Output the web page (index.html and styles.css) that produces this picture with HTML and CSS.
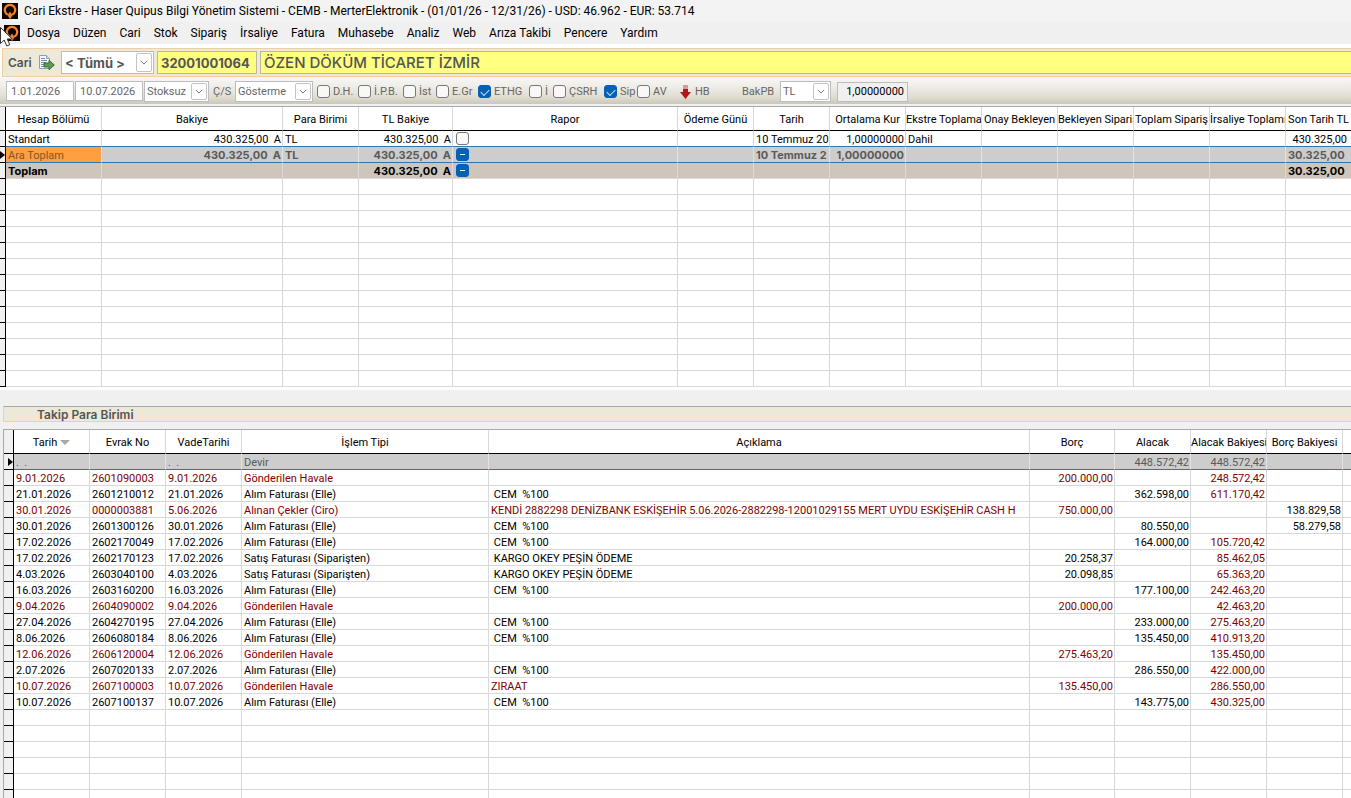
FILE: index.html
```html
<!DOCTYPE html>
<html lang="tr">
<head>
<meta charset="utf-8">
<title>Cari Ekstre</title>
<link rel="stylesheet" href="styles.css">
</head>
<body>
<svg class="defs" width="0" height="0" aria-hidden="true">
  <symbol id="logo" viewBox="0 0 16 16">
    <rect width="16" height="16" fill="#0d0603"/>
    <path d="M5.800 11.700A5.200 5.200 0 1 1 10.200 11.700" fill="none" stroke="#f58220" stroke-width="2.200"/>
    <path d="M8 8.500L10.400 12L8.700 15.500H7.300L5.600 12Z" fill="#f58220"/>
  </symbol>
  <symbol id="chevron" viewBox="0 0 10 6">
    <path d="M1 1L5 5L9 1" fill="none" stroke="#666" stroke-width="1.1"/>
  </symbol>
</svg>

<header class="titlebar">
  <svg class="logo"><use href="#logo"/></svg>
  <span>Cari Ekstre - Haser Quipus Bilgi Yönetim Sistemi - CEMB - MerterElektronik - (01/01/26 - 12/31/26) - USD: 46.962 - EUR: 53.714</span>
</header>

<nav class="menubar">
  <svg class="logo"><use href="#logo"/></svg>
  <button>Dosya</button><button>Düzen</button><button>Cari</button><button>Stok</button><button>Sipariş</button><button>İrsaliye</button><button>Fatura</button><button>Muhasebe</button><button>Analiz</button><button>Web</button><button>Arıza Takibi</button><button>Pencere</button><button>Yardım</button>
  <svg class="pointer" viewBox="0 0 13 20"><path d="M0.500 0.500V16.500L4.200 13L6.800 19L9.800 17.700L7.200 12H12.300Z" fill="#fff" stroke="#333" stroke-width="1"/></svg>
</nav>

<section class="account">
  <label for="scope">Cari</label>
  <button class="icon-button" aria-label="Aktar">
    <svg viewBox="0 0 17 17">
      <path d="M1.500 1.500H8.500L11.500 4.500V14.500H1.500Z" fill="#f4f8fc" stroke="#8aa0b8"/>
      <path d="M8.500 1.500V4.500H11.500" fill="#d5e2ef" stroke="#8aa0b8"/>
      <path d="M3 4.500H7M3 6.500H9M3 8.500H8M3 10.500H7M3 12.500H7" stroke="#6d8fb5"/>
      <path d="M6 9H11V6.300L16.300 11L11 15.700V13H6Z" fill="#5f9a52" stroke="#3c6b38"/>
    </svg>
  </button>
  <span class="combo combo-scope"><select id="scope"><option>&lt; Tümü &gt;</option></select><svg><use href="#chevron"/></svg></span>
  <input class="code" aria-label="Cari kodu" value="32001001064">
  <input class="name" aria-label="Cari adı" value="ÖZEN DÖKÜM TİCARET İZMİR">
</section>

<section class="filters">
  <div class="dates">
    <input class="date" aria-label="Başlangıç" value="1.01.2026">
    <input class="date" aria-label="Bitiş" value="10.07.2026">
    <span class="combo combo-stock"><select aria-label="Stok"><option>Stoksuz</option></select><svg><use href="#chevron"/></svg></span>
  </div>
  <label class="cs" for="cs">Ç/S</label>
  <span class="combo combo-cs"><select id="cs"><option>Gösterme</option></select><svg><use href="#chevron"/></svg></span>
  <div class="checks">
    <label><input type="checkbox">D.H.</label>
    <label><input type="checkbox">İ.P.B.</label>
    <label><input type="checkbox">İst</label>
    <label><input type="checkbox">E.Gr</label>
    <label><input type="checkbox" checked>ETHG</label>
    <label><input type="checkbox">İ</label>
    <label><input type="checkbox">ÇSRH</label>
    <label><input type="checkbox" checked>Sip</label>
    <label><input type="checkbox">AV</label>
  </div>
  <button class="hb"><svg viewBox="0 0 11 14"><path d="M3 0H8V4H3Z" fill="#d99a9a"/><path d="M3 4H8V7H11L5.500 14L0 7H3Z" fill="#b5161b"/></svg>HB</button>
  <label class="bakpb" for="pb">BakPB</label>
  <span class="combo combo-pb"><select id="pb"><option>TL</option></select><svg><use href="#chevron"/></svg></span>
  <input class="rate" aria-label="Kur" value="1,00000000" readonly>
</section>

<main>
  <div class="summary">
    <table class="grid">
      <colgroup><col class="w6"><col class="w96"><col class="w181"><col class="w76"><col class="w94"><col><col class="w76"><col class="w76"><col class="w76"><col class="w76"><col class="w76"><col class="w76"><col class="w76"><col class="w76"><col class="w65"></colgroup>
      <thead><tr><th class="gutter"></th><th>Hesap Bölümü</th><th>Bakiye</th><th>Para Birimi</th><th>TL Bakiye</th><th>Rapor</th><th>Ödeme Günü</th><th>Tarih</th><th>Ortalama Kur</th><th>Ekstre Toplama</th><th>Onay Bekleyen</th><th>Bekleyen Sipariş</th><th>Toplam Sipariş</th><th>İrsaliye Toplamı</th><th>Son Tarih TL</th></tr></thead>
      <tbody id="summary-rows">
        <tr class="before-current"><td class="gutter"></td><td>Standart</td><td class="num">430.325,00&nbsp; A</td><td>TL</td><td class="num">430.325,00&nbsp; A</td><td><input type="checkbox" aria-label="Rapor"></td><td></td><td>10 Temmuz 202</td><td class="num">1,00000000</td><td>Dahil</td><td></td><td></td><td></td><td></td><td class="num last">430.325,00</td></tr>
        <tr class="current bold"><td class="gutter"><i class="marker"></i></td><td class="focus">Ara Toplam</td><td class="num">430.325,00&nbsp; A</td><td>TL</td><td class="num">430.325,00&nbsp; A</td><td><input type="checkbox" class="partial" aria-label="Rapor"></td><td></td><td>10 Temmuz 2</td><td class="num">1,00000000</td><td></td><td></td><td></td><td></td><td></td><td class="num last">30.325,00</td></tr>
        <tr class="total bold"><td class="gutter"></td><td>Toplam</td><td></td><td></td><td class="num">430.325,00&nbsp; A</td><td><input type="checkbox" class="partial" aria-label="Rapor"></td><td></td><td></td><td></td><td></td><td></td><td></td><td></td><td></td><td class="num last">30.325,00</td></tr>
      </tbody>
    </table>
  </div>

  <h2 class="band">Takip Para Birimi</h2>

  <div class="ledger">
    <table class="grid">
      <colgroup><col class="w10"><col class="w76"><col class="w76"><col class="w76"><col class="w247"><col><col class="w85"><col class="w76"><col class="w76"><col class="w76"><col class="w8"></colgroup>
      <thead><tr><th class="gutter"></th><th>Tarih<i class="sort"></i></th><th>Evrak No</th><th>VadeTarihi</th><th>İşlem Tipi</th><th>Açıklama</th><th>Borç</th><th>Alacak</th><th>Alacak Bakiyesi</th><th>Borç Bakiyesi</th><th></th></tr></thead>
      <tbody id="ledger-rows"></tbody>
    </table>
  </div>
</main>
<script src="app.js"></script>
</body>
</html>
```
FILE: styles.css
```css
* { box-sizing: border-box; }

body {
  margin: 0;
  height: 100vh;
  display: flex;
  flex-direction: column;
  overflow: hidden;
  background: #f0f0f0;
  color: #000;
  font: 11px/14px Roboto, "Liberation Sans", sans-serif;
}

button, input, select { font: inherit; color: inherit; margin: 0; }
button { border: 0; background: none; padding: 0; }
.defs { position: absolute; }

.titlebar, .menubar {
  display: flex;
  align-items: center;
  height: 22px;
  flex: none;
  font: 12px/16px Roboto, "Noto Sans", sans-serif;
  white-space: nowrap;
}
.titlebar { background: #f3f3f3; padding-left: 2px; gap: 6px; }
.menubar { position: relative; padding-left: 4px; gap: 13px; }
.menubar .logo { margin-right: -6px; }
.logo { width: 16px; height: 16px; flex: none; }
.pointer { position: absolute; left: 0; top: 5px; width: 13px; height: 20px; }

.account {
  display: flex;
  align-items: center;
  flex: none;
  height: 29px;
  margin: 4px 0 0 2px;
  padding: 2px 0 2px 5px;
  background: #ece9d8;
  border: 1px solid #f3cda4;
  border-right: 0;
  box-shadow: 0 -4px #fff, -2px 0 #fff;
  color: #555;
  font: bold 12px/16px Inter, sans-serif;
}
.account label { font-weight: 600; width: 30px; }
.icon-button { width: 17px; height: 17px; margin-right: 6px; }
.icon-button svg { display: block; }

.combo { position: relative; display: block; height: 21px; flex: none; }
.combo select {
  width: 100%;
  height: 100%;
  appearance: none;
  border: 1px solid #bdbdbd;
  border-radius: 0;
  background: #fff;
  padding: 1px 2px 0;
}
.combo svg {
  position: absolute;
  right: 2px;
  top: 2px;
  width: 16px;
  height: calc(100% - 4px);
  padding: 3px;
  border: 1px solid #c4c4c4;
  border-radius: 2px;
  background: #fff;
  pointer-events: none;
}
.combo-scope { width: 93px; height: 23px; margin-right: 3px; font-size: 13px; }
.combo-scope select { padding: 0 3px; }
.code, .name { height: 23px; border: 1px solid #b9b9a0; background: #ffff80; padding: 0 3px; }
.code { width: 100px; margin-right: 3px; font-size: 13px; }
.name { flex: 1; min-width: 0; border-right: 0; font-size: 15px; font-weight: 500; }

.filters {
  display: flex;
  align-items: center;
  flex: none;
  height: 30px;
  padding-left: 6px;
  border-bottom: 1px solid #a9a9a9;
  background: linear-gradient(#f8f7f4 0, #f0eee9 30%, #e0dcd1 70%, #c9c8b9 27px, #f0f0f0 27px);
  color: #666;
}
.dates { display: flex; gap: 1px; margin-right: 4px; }
.date { width: 68px; height: 20px; border: 1px solid #bdbdbd; background: #fff; padding: 0 4px; }
.combo-stock { width: 65px; }
.cs { width: 22px; }
.combo-cs { width: 78px; margin-right: 4px; }
.checks {
  display: grid;
  grid-template-columns: 41px 45px 33px 42px 51px 24px 51px 33px 43px;
  flex: none;
}
.checks label { display: flex; align-items: center; gap: 3px; white-space: nowrap; }
.hb { display: flex; align-items: center; gap: 4px; width: 62px; }
.hb svg { width: 11px; height: 14px; }
.bakpb { width: 38px; }
.combo-pb { width: 51px; margin-right: 6px; }
.rate { width: 71px; height: 20px; border: 1px solid #bdbdbd; background: #f0f0f0; color: #000; text-align: right; padding: 0 3px; }

input[type="checkbox"] {
  appearance: none;
  flex: none;
  display: block;
  position: relative;
  width: 13px;
  height: 13px;
  border: 1px solid #777;
  border-radius: 3px;
  background: #f8f8f8;
}
input[type="checkbox"]:checked, input.partial { background: #0560b6; border-color: #0560b6; }
input[type="checkbox"]:checked::after {
  content: "";
  position: absolute;
  left: 2px;
  top: 3px;
  width: 7px;
  height: 4px;
  border: solid #cfe3f5;
  border-width: 0 0 1px 1px;
  transform: rotate(-45deg);
}
input.partial::after { content: ""; position: absolute; left: 3px; top: 5px; width: 5px; height: 1px; background: #fff; }

main { flex: 1; min-height: 0; display: flex; flex-direction: column; }
.summary { flex: none; background: #fff; padding-bottom: 3px; }

.grid { width: 100%; table-layout: fixed; border-collapse: separate; border-spacing: 0; background: #fff; }
.grid th, .grid td {
  height: 16px;
  padding: 2px 2px 0;
  border-right: 1px solid #d9d9d9;
  border-bottom: 1px solid #d9d9d9;
  overflow: hidden;
  white-space: pre;
  text-align: left;
  font-weight: 400;
  line-height: 13px;
}
.grid th { height: 24px; padding: 1px 0 0; border-bottom-color: #000; text-align: center; }
.grid tr > :last-child { border-right: 0; }
.grid .num { text-align: right; padding-right: 1px; }
.grid .num.last { padding-right: 4px; }
.grid .bold td { font: bold 11px/13px Inter, sans-serif; }
.grid .bold .last { padding-right: 7px; }
.grid .gutter { background: #f0f0f0; border-right-color: #000; border-bottom-color: #000; padding: 0; }
.grid .before-current td:not(.gutter), .grid .current td:not(.gutter) { border-bottom-color: #2a76b8; }
.grid .current td:not(.gutter) { background: #cdcdcd; border-right-color: #e2e2e2; color: #5a5a5a; }
.grid .current td.focus:not(.gutter) { background: #ff9f3f; color: #80562b; font: 11px/13px Roboto, sans-serif; }
.total td:not(.gutter) { background: #cec6bb; }
.grid td:has(input) { padding: 1px 3px; }
.marker { display: block; width: 0; height: 0; margin-left: auto; border: solid transparent; border-width: 4px 0 4px 5px; border-left-color: #000; }
.sort { display: inline-block; margin-left: 3px; border: solid transparent; border-width: 5px 5px 0; border-top-color: #a8a8a0; vertical-align: middle; }

.band {
  flex: none;
  margin: 16px 0 7px 3px;
  height: 16px;
  padding-left: 33px;
  background: #ece9d8;
  border-top: 1px solid #a9a9a9;
  border-bottom: 1px solid #f3cda4;
  border-left: 1px solid #f3cda4;
  color: #555;
  font: 600 12px/15px Inter, sans-serif;
}

.ledger { flex: 1; min-height: 0; overflow: hidden; margin-left: 3px; border: solid #a9a9a9; border-width: 1px 0 0 1px; background: #fff; }
.debit { color: #800000; }
.w6 { width: 6px; } .w8 { width: 8px; } .w10 { width: 10px; } .w65 { width: 65px; } .w76 { width: 76px; }
.w85 { width: 85px; } .w94 { width: 94px; } .w96 { width: 96px; } .w181 { width: 181px; } .w247 { width: 247px; }
```
FILE: app.js
```javascript
// Columns: date, document, due date, type, description, debit, credit, credit balance, debit balance
const entries = [
  [".  .", "", ".  .", "Devir", "", "", "448.572,42", "448.572,42", ""],
  ["9.01.2026", "2601090003", "9.01.2026", "Gönderilen Havale", "", "200.000,00", "", "248.572,42", ""],
  ["21.01.2026", "2601210012", "21.01.2026", "Alım Faturası (Elle)", " CEM  %100", "", "362.598,00", "611.170,42", ""],
  ["30.01.2026", "0000003881", "5.06.2026", "Alınan Çekler (Ciro)", "KENDİ 2882298 DENİZBANK ESKİŞEHİR 5.06.2026-2882298-12001029155 MERT UYDU ESKİŞEHİR CASH H", "750.000,00", "", "", "138.829,58"],
  ["30.01.2026", "2601300126", "30.01.2026", "Alım Faturası (Elle)", " CEM  %100", "", "80.550,00", "", "58.279,58"],
  ["17.02.2026", "2602170049", "17.02.2026", "Alım Faturası (Elle)", " CEM  %100", "", "164.000,00", "105.720,42", ""],
  ["17.02.2026", "2602170123", "17.02.2026", "Satış Faturası (Siparişten)", " KARGO OKEY PEŞİN ÖDEME", "20.258,37", "", "85.462,05", ""],
  ["4.03.2026", "2603040100", "4.03.2026", "Satış Faturası (Siparişten)", " KARGO OKEY PEŞİN ÖDEME", "20.098,85", "", "65.363,20", ""],
  ["16.03.2026", "2603160200", "16.03.2026", "Alım Faturası (Elle)", " CEM  %100", "", "177.100,00", "242.463,20", ""],
  ["9.04.2026", "2604090002", "9.04.2026", "Gönderilen Havale", "", "200.000,00", "", "42.463,20", ""],
  ["27.04.2026", "2604270195", "27.04.2026", "Alım Faturası (Elle)", " CEM  %100", "", "233.000,00", "275.463,20", ""],
  ["8.06.2026", "2606080184", "8.06.2026", "Alım Faturası (Elle)", " CEM  %100", "", "135.450,00", "410.913,20", ""],
  ["12.06.2026", "2606120004", "12.06.2026", "Gönderilen Havale", "", "275.463,20", "", "135.450,00", ""],
  ["2.07.2026", "2607020133", "2.07.2026", "Alım Faturası (Elle)", " CEM  %100", "", "286.550,00", "422.000,00", ""],
  ["10.07.2026", "2607100003", "10.07.2026", "Gönderilen Havale", "ZIRAAT", "135.450,00", "", "286.550,00", ""],
  ["10.07.2026", "2607100137", "10.07.2026", "Alım Faturası (Elle)", " CEM  %100", "", "143.775,00", "430.325,00", ""]
];
const redTypes = ["Gönderilen Havale", "Alınan Çekler (Ciro)"];

function addRow(body, cells) {
  const tr = body.insertRow();
  tr.insertCell().className = "gutter";
  cells.forEach(text => { tr.insertCell().textContent = text; });
  return tr;
}

const ledger = document.getElementById("ledger-rows");
entries.forEach((entry, index) => {
  const tr = addRow(ledger, [...entry, ""]);
  const red = redTypes.includes(entry[3]);
  [...tr.cells].forEach((cell, i) => {
    if (i > 5) cell.classList.add("num");
    if (index > 0 && ((red && i > 0 && i < 8) || i === 8)) cell.classList.add("debit");
  });
  if (index === 0) {
    tr.className = "current";
    tr.cells[0].innerHTML = '<i class="marker"></i>';
  }
});
for (let i = 0; i < 6; i++) addRow(ledger, Array(10).fill(""));

const summary = document.getElementById("summary-rows");
for (let i = 0; i < 13; i++) addRow(summary, Array(14).fill(""));
```
